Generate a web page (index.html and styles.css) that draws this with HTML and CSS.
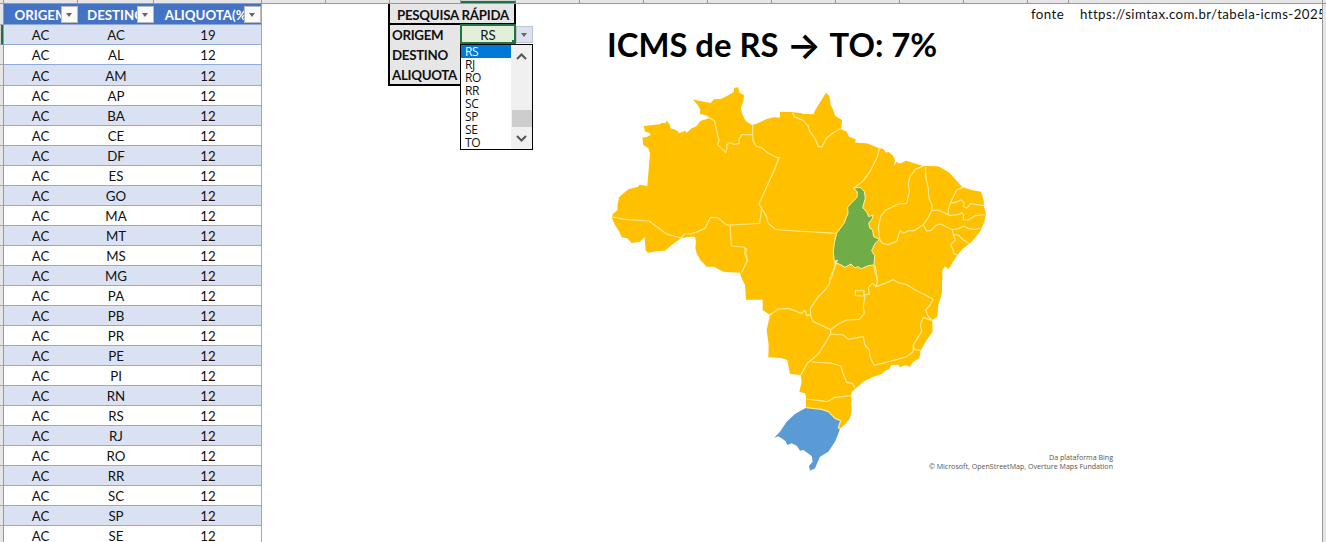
FILE: index.html
```html
<!DOCTYPE html>
<html lang="pt-BR">
<head>
<meta charset="utf-8">
<title>Tabela ICMS</title>
<link rel="stylesheet" href="styles.css">
</head>
<body>
<div class="column-heads" id="heads"></div>
<main class="sheet">
  <div class="row-heads" id="rowHeads"></div>
  <table class="rates">
    <colgroup><col class="c-origin"><col class="c-dest"><col class="c-rate"></colgroup>
    <thead><tr>
      <th><div class="head"><span>ORIGEM</span><i class="filter"></i></div></th>
      <th><div class="head"><span>DESTINO</span><i class="filter"></i></div></th>
      <th><div class="head"><span>ALIQUOTA(%)</span><i class="filter"></i></div></th>
    </tr></thead>
    <tbody id="rates"></tbody>
  </table>
  <section class="search">
    <h2>PESQUISA RÁPIDA</h2>
    <div class="fields">
      <div class="labels"><span>ORIGEM</span><span>DESTINO</span><span>ALIQUOTA</span></div>
      <div class="value">RS<i class="handle"></i></div>
    </div>
    <i class="filter picker"></i>
    <div class="menu">
      <ul><li class="selected">RS</li><li>RJ</li><li>RO</li><li>RR</li><li>SC</li><li>SP</li><li>SE</li><li>TO</li></ul>
      <div class="scroll">
        <svg width="11" height="7" viewBox="0 0 11 7"><path d="M1 6 5.5 1.5 10 6"/></svg>
        <i class="thumb"></i>
        <svg width="11" height="7" viewBox="0 0 11 7"><path d="M1 1 5.5 5.500 10 1"/></svg>
      </div>
    </div>
  </section>
  <section class="chart">
    <h1><span>ICMS de RS</span> <span class="arrow">→</span> <span>TO: 7%</span></h1>
    <svg class="map" width="400" height="400" viewBox="600 80 400 400">
      <g class="north" transform="translate(600 80) scale(.33333)">
        <path class="land" d="M278 58 296 62 320 67 332 69 342 58 362 57 382 47 400 37 403 23 415 22 418 38 432 45 430 62 422 85 427 103 437 123 457 136 480 127 500 117 520 112 543 113 541 97 575 96 605 100V560H320L301 540 290 520 286 505 288 485 285 470 270 470 243 475 215 495 195 512 170 514 145 518 137 512 134 470 120 485 95 489 82 475 65 472 58 455 45 435 36 415 38 403 52 390 53 372 58 350 85 328 115 320 118 314 142 318 150 220 145 205 130 195 127 173 142 170 152 165 148 158 135 155 131 138 180 133 185 128 195 130 201 122 210 135 211 145 228 150 238 160 255 152 260 158 275 145 290 138 302 122 328 115 315 105 300 102 301 90 293 75Z"/>
      </g>
      <g transform="translate(780 80) scale(.33333)">
        <path class="land" d="M0 95 35 97 40 102 60 101 100 103 106 90 138 38 148 48 152 75 160 90 165 107 186 120 184 148 200 155 207 170 227 178 226 188 260 190 298 205 310 207 318 218 325 215 340 228 345 240 342 258 352 243 354 250 362 250 378 242 410 252 430 258 475 259 495 270 510 280 525 297 548 322 575 330 603 335 611 360 612 380 618 400 613 425 600 455 575 485 550 505 532 525 515 552 505 568 495 558 486 572 488 600H0Z"/>
      </g>
      <g transform="translate(730 230) scale(.33333)">
        <path class="land" d="M0 0H640V100L655 113 637 108 636 140V190L625 225 622 260 607 270 608 305 590 330 572 362 568 385 550 395 540 410 525 406 510 412 505 404 484 405 478 418 469 420 455 432 430 440 400 455 378 475 365 485 363 510 362 530H230V505L225 490 208 485 215 455 212 435 180 432 172 390 150 383 115 382 116 345 110 300 120 255 98 240V209H48L45 165 35 145 30 128 0 127-20 125-52 108-90 90V50H0Z"/>
      </g>
      <g transform="translate(760 340) scale(.33333)">
        <path class="land" d="M138 150H275L272 165 275 178 273 190 275 210 270 235 258 250 240 266 230 262 200 215 138 207Z"/>
        <path class="origin" d="M138 203 185 208 205 215 225 235 242 242 235 262 240 268 225 305 205 335 180 350 165 385 150 392 147 378 158 365 155 348 130 330 120 332 111 318 95 310 82 315 77 304 68 297 55 289 42 294 60 275 80 245 105 222Z"/>
      </g>
      <g transform="translate(780 80) scale(.33333)">
        <path class="target" d="M220 325 240 322 253 334 256 355 248 383 260 396 266 410 280 405 276 417 266 430 270 445 278 450 281 470 298 478 285 491 275 512 284 527 282 555 265 557 242 567 236 560 224 563 213 552 195 562 180 553 163 548 160 515 163 488 170 460 192 430 204 400 203 382 215 368 231 352 232 335Z"/>
        <path class="border" d="M38 98 42 110 70 121 85 139 88 152 105 175 115 200 126 200 139 175 164 155 182 146M298 205 292 230 270 275 248 304 220 325M430 258 406 268 390 290 385 310 388 335 380 370 355 372 316 391 302 410 295 440 299 478 308 490 325 494 350 484 360 452 370 460 386 452 402 452 430 434 445 412 455 392 456 375 447 355 445 325 438 295 436 262M430 434 440 453 453 451 470 435 482 432 517 449 535 446 552 438 563 445 585 448 600 445M455 392 475 390 490 397 510 406 535 404 545 398 551 405 550 420 565 420 585 407 614 404M548 322 530 330 520 351 512 367 505 388 504 404M512 367 524 368 544 360 552 367 550 380 561 384 572 371 612 377M517 449 520 464 535 465 550 480 565 489M520 464 526 480 512 494 518 507 522 521 532 525M0 450 170 460M282 555 284 575 290 588 291 600M163 548 172 541 165 560 153 598"/>
      </g>
      <g transform="translate(600 80) scale(.33333)">
        <path class="border" d="M315 105 332 115 343 122 349 147 357 182 353 194 377 217 381 205 380 194 389 188 403 193 418 190 416 180 425 164H458V136M458 164 459 182 468 198 486 204 502 218 532 233 540 232M537 233 522 272 477 372 500 410 504 429 525 447 540 450M477 372 485 385 479 430 390 435 378 434 355 414 332 412 315 445 290 456 272 462 253 462 243 474 200 462 147 423 75 418 38 411M390 435 394 498 430 501 440 506 434 520 444 545"/>
      </g>
      <g transform="translate(730 230) scale(.33333)">
        <path class="border" d="M44 54 52 90 35 128M120 255 145 237 175 235 215 250 225 240 230 257 242 253 241 235 265 200 285 180 299 160 300 145 315 108 318 90M241 256 250 275 302 299 325 282 350 270 388 268 403 250 400 230 405 198 376 197V182H402V198M402 195 418 192 415 172 428 160 438 170 442 155 436 108M438 170 465 160 490 149 505 158 530 164 560 182 585 194 609 208 600 225 587 240 594 258 607 272M607 272 580 262 571 285 575 305 562 325 550 345 553 358 572 362M550 345 549 365 530 380 495 390 432 406 420 380 418 360 405 345 400 320 355 328 340 315 302 312 302 299M302 312 285 340 265 372 232 400 212 435M245 396 300 399 333 408 339 430 350 457 367 460 375 473M230 507 292 515 312 503 362 497"/>
      </g>
      <g transform="translate(760 340) scale(.33333)">
        <path class="border" d="M138 203 185 208 205 215 225 235 242 242 235 262 240 268"/>
      </g>
    </svg>
    <p class="credit">Da plataforma Bing<br>© Microsoft, OpenStreetMap, Overture Maps Fundation</p>
  </section>
  <p class="source"><span>fonte</span><span class="url">https://simtax.com.br/tabela-icms-2025</span></p>
  <div class="edge"></div>
</main>
<script src="script.js"></script>
</body>
</html>
```
FILE: styles.css
```css
* { box-sizing: border-box; }
body { margin: 0; width: 1326px; height: 542px; overflow: hidden; background: #fff; color: #111; font: 13.3px/20px Lato, Carlito, sans-serif; }
h1, h2, p, ul { margin: 0; padding: 0; }
.column-heads { display: flex; height: 4px; background: #e6e6e6; border-bottom: 1px solid #999; }
.column-heads i { flex: none; border-right: 1px solid #999; }
.column-heads .active { background: #d2d2d2; border-bottom: 2px solid #217346; }
.sheet { display: flex; align-items: flex-start; height: 538px; overflow: hidden; }
.row-heads { width: 4px; height: 538px; background: #e6e6e6; border-right: 1px solid #999; flex: none; }
.row-heads i { display: block; height: 20px; border-bottom: 1px solid #aaa; }
.row-heads .tall { height: 21px; }
.row-heads .active { border-right: 2px solid #217346; background: #d2d2d2; }
.rates { flex: none; width: 258px; table-layout: fixed; border-collapse: separate; border-spacing: 0; border-right: 1px solid #8ea9db; text-align: center; }
.c-origin { width: 74px; }
.c-dest { width: 76px; }
.c-rate { width: 107px; }
.rates th, .rates td { padding: 0; height: 20px; line-height: 19px; border-bottom: 1px solid #8ea9db; }
.rates td { padding-top: 1px; line-height: 18px; }
.rates tbody tr:nth-child(odd) { background: #d9e1f2; }
.rates tbody tr:nth-child(3) td { height: 21px; }
.rates th { height: 21px; background: #4472c4; color: #fff; }
.rates td:first-child { padding-right: 1px; }
.rates td:nth-child(3) { padding-left: 1px; }
.head { position: relative; height: 20px; line-height: 22px; overflow: hidden; }
.filter { position: absolute; right: 0; top: 2px; width: 17px; height: 17px; background: #fafafa; border: 1px solid #bbb; }
.filter::after { content: ""; position: absolute; left: 4px; top: 6px; border: 4px solid transparent; border-top-color: #666; border-bottom: 0; border-left-width: 3.5px; border-right-width: 3.5px; }
.search { position: relative; flex: none; width: 128px; margin-left: 126px; height: 82px; border: 2px solid #000; border-top: 0; background: #e7e6e6; font-weight: bold; }
.search h2 { height: 21px; padding-left: 2px; border-bottom: 2px solid #000; font-size: 13.3px; line-height: 22px; letter-spacing: -.25px; text-align: center; }
.fields { display: flex; }
.labels { display: flex; flex-direction: column; width: 70px; padding-left: 2px; line-height: 20px; letter-spacing: -.3px; }
.value { position: relative; flex: 1; height: 20px; margin: -1px -2px 0 0; border: 2px solid #217346; background: #e2f0d9; font-weight: normal; line-height: 18px; text-align: center; }
.handle { position: absolute; right: -2px; bottom: -2px; width: 4px; height: 4px; background: #217346; }
.picker { left: 126px; top: 22px; width: 17px; height: 17px; background: #dce1ec; border-color: #bcc4d4; }
.menu { position: absolute; left: 70px; top: 40px; display: flex; width: 73px; height: 106px; border: 1px solid #000; background: #fff; font: 12px/14px "Open Sans", "Noto Sans", sans-serif; }
.menu ul { width: 50px; list-style: none; }
.menu li { height: 13px; padding-left: 4px; letter-spacing: -.3px; }
.menu .selected { background: #0078d7; color: #fff; }
.scroll { display: flex; flex-direction: column; align-items: center; justify-content: space-between; width: 21px; padding: 8px 0 7px; background: #f0f0f0; }
.scroll svg { fill: none; stroke: #555; stroke-width: 2; }
.scroll .thumb { width: 20px; height: 17px; background: #cdcdcd; margin-top: 41px; }
.chart { flex: none; width: 514px; margin-left: 84px; display: flex; flex-direction: column; }
.chart h1 { display: flex; gap: 8px; height: 76px; padding: 19px 0 0 7px; font-size: 32.8px; line-height: 44px; white-space: nowrap; color: #000; }
.arrow { width: 35px; text-align: center; font: 600 36px/44px Inter, "DejaVu Sans", sans-serif; }
.map { display: block; flex: none; }
.land { fill: #ffc000; }
.origin { fill: #5b9bd5; }
.target { fill: #70ad47; stroke: #fff0b0; stroke-width: 3; }
.border { fill: none; stroke: #ffe88f; stroke-width: 3.6; stroke-linejoin: round; }
.credit { margin-top: -27px; padding-right: 1px; color: #555; font: 7.1px/9px "Open Sans", sans-serif; text-align: right; }
.source { display: flex; gap: 16px; flex: none; width: 291px; margin-left: -83px; overflow: hidden; line-height: 21px; letter-spacing: .4px; white-space: nowrap; }
.edge { flex: none; width: 4px; height: 538px; border-left: 1px solid #999; background: #e6e6e6; }
```
FILE: script.js
```js
const states = "AC AL AM AP BA CE DF ES GO MA MT MS MG PA PB PR PE PI RN RS RJ RO RR SC SP SE".split(" ");
document.getElementById("rates").innerHTML = states.map((s, i) =>
  `<tr><td>AC</td><td>${s}</td><td>${i ? 12 : 19}</td></tr>`).join("");

const edges = [4, 78, 154, 262, 326, 390, 461, 516, 580, 644, 708, 772, 836, 900, 964, 1028, 1069, 1323];
document.getElementById("heads").innerHTML = edges.map((x, i) =>
  `<i class="${x === 516 ? "active" : ""}" style="width:${x - (edges[i - 1] || 0)}px"></i>`).join("");

document.getElementById("rowHeads").innerHTML = Array.from({ length: 27 }, (_, i) =>
  `<i class="${i === 0 || i === 3 ? "tall" : i === 1 ? "active" : ""}"></i>`).join("");
```
